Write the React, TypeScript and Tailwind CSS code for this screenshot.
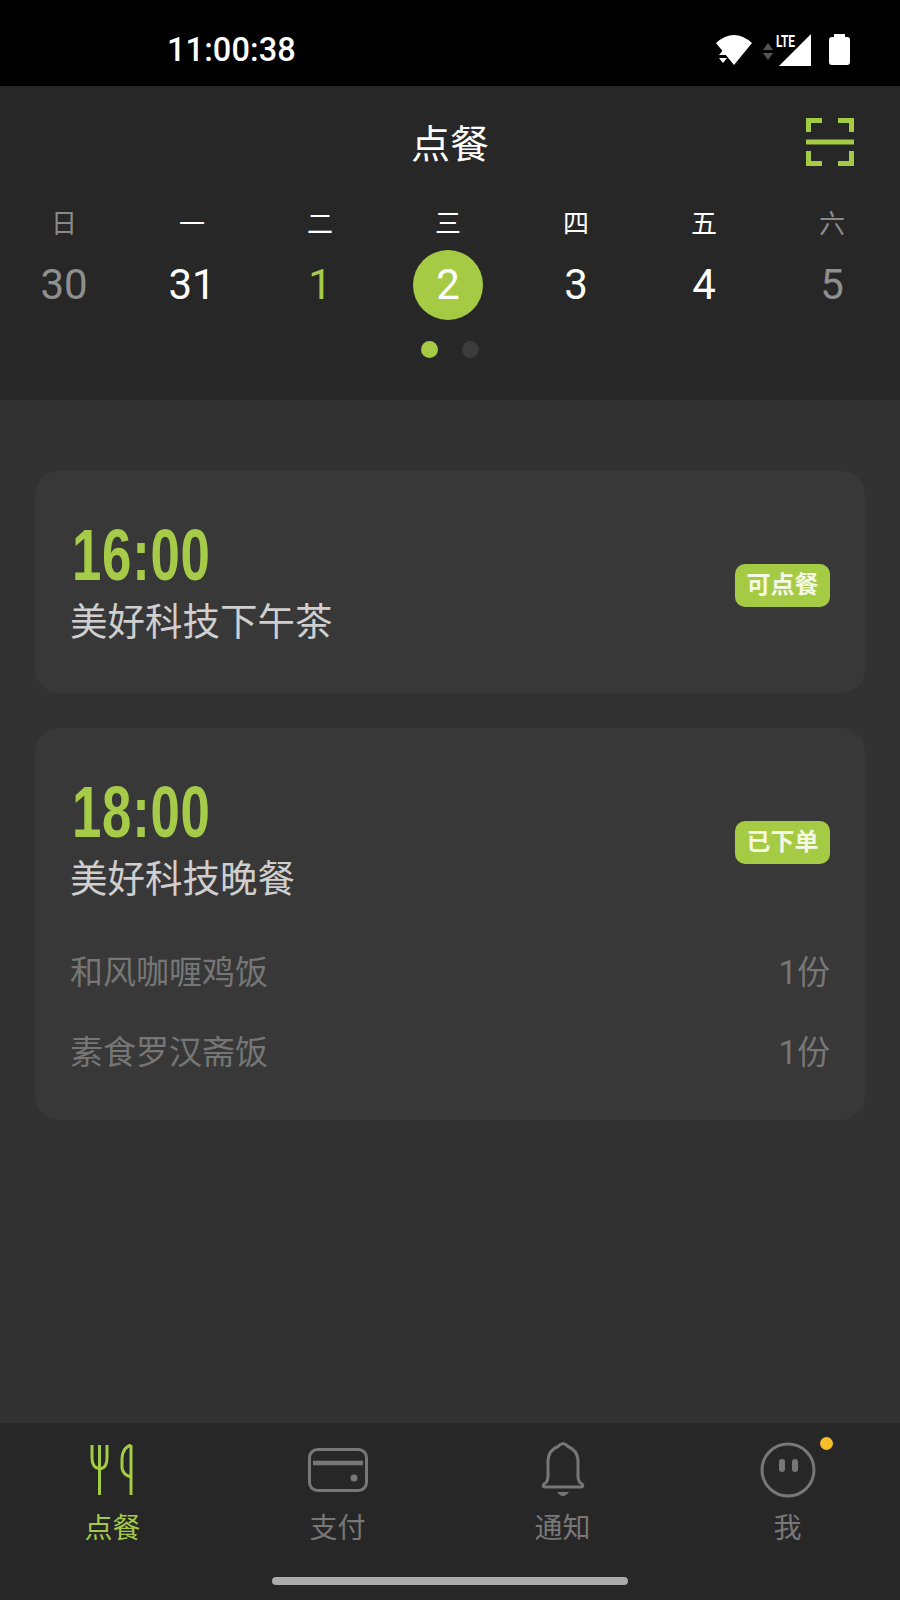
import React from "react";

const CJK = "font-['Roboto','Noto_Sans_CJK_SC',sans-serif]";

const days = [
  { w: "日", d: "30", wc: "text-[#8a8a8a]", dc: "text-[#8f8f8f]" },
  { w: "一", d: "31", wc: "text-white", dc: "text-white" },
  { w: "二", d: "1", wc: "text-white", dc: "text-[#a5cb48]" },
  { w: "三", d: "2", wc: "text-white", dc: "text-white", active: true },
  { w: "四", d: "3", wc: "text-white", dc: "text-white" },
  { w: "五", d: "4", wc: "text-white", dc: "text-white" },
  { w: "六", d: "5", wc: "text-[#8a8a8a]", dc: "text-[#8f8f8f]" },
];

function StatusIcons() {
  return (
    <svg width="148" height="44" viewBox="710 28 148 44">
      <path d="M716 43 Q734 27 752 43 L734 65 Z" fill="#fff" />
      <path d="M719 55 L723 50 L727 55 Z M719 58 L727 58 L723 63 Z" fill="#fff" />
      <path d="M763 50 L768 43 L773 50 Z M763 53 L773 53 L768 60 Z" fill="#555" />
      <path d="M779 66 L811 34 L811 66 Z" fill="#fff" />
      <text x="776" y="46.500" fontSize="16" fontWeight="700" fill="#fff" fontFamily="Roboto" textLength="19" lengthAdjust="spacingAndGlyphs">LTE</text>
      <path d="M832 37 Q829 37 829 40 L829 62 Q829 65 832 65 L847 65 Q850 65 850 62 L850 40 Q850 37 847 37 L845 37 L845 34 L834 34 L834 37 Z" fill="#fff" />
    </svg>
  );
}

function ScanIcon() {
  return (
    <svg width="48" height="48" viewBox="0 0 48 48" fill="none" stroke="#a4cb45" strokeWidth="5">
      <path d="M2.500 14 V2.500 H16 M32 2.500 H45.500 V14 M2.500 33 V45.500 H16 M32 45.500 H45.500 V33" />
      <path d="M0 24 H48" />
    </svg>
  );
}

function Badge({ text }: { text: string }) {
  return (
    <div className="w-[95px] h-[43px] rounded-[10px] bg-[#a5cb45] flex items-center justify-center text-[24px] leading-none font-bold text-[#f4f8e4]">
      {text}
    </div>
  );
}

function Time({ text }: { text: string }) {
  return (
    <div className="h-[64px] flex items-center">
      <span className="inline-block origin-left scale-x-[0.733] ml-[2px] tracking-[1px] font-['Liberation_Sans',sans-serif] font-bold text-[72px] leading-none text-[#a5cb48]">
        {text}
      </span>
    </div>
  );
}

function Card({ time, title, badge, items }: { time: string; title: string; badge: string; items?: string[] }) {
  return (
    <div className="rounded-[24px] bg-[#383838] pl-[35px] pr-[35px] pt-[52px] pb-[46px]">
      <div className="flex items-center justify-between">
        <div>
          <Time text={time} />
          <div className="mt-[10px] text-[37.500px] leading-[50px] text-[#cfcfcf]">{title}</div>
        </div>
        <Badge text={badge} />
      </div>
      {items && (
        <div className="mt-[46px] mb-[-2px] flex flex-col gap-[34px]">
          {items.map((it) => (
            <div key={it} className="flex justify-between text-[33px] leading-[46px] text-[#767676]">
              <span>{it}</span>
              <span>1份</span>
            </div>
          ))}
        </div>
      )}
    </div>
  );
}

const G = "#a4cb45";
const M = "#777777";

function Tab({ label, active, children }: { label: string; active?: boolean; children: React.ReactNode }) {
  return (
    <div className="flex flex-col items-center">
      <div className="h-[60px] flex items-center justify-center">{children}</div>
      <div className={`mt-[11px] text-[28px] leading-[36px] ${active ? "text-[#a4c94a]" : "text-[#777777]"}`}>{label}</div>
    </div>
  );
}

export default function App() {
  return (
    <div className={`w-[900px] h-[1600px] flex flex-col bg-[#323232] overflow-hidden ${CJK}`}>
      <div className="h-[86px] bg-black flex items-center justify-between pl-[167px] pr-[42px] pt-[14px]">
        <span className="text-[32.500px] font-medium text-white leading-none tracking-[0.1px]">11:00:38</span>
        <StatusIcons />
      </div>

      <div className="h-[314px] bg-[#272727] flex flex-col">
        <div className="relative h-[116px] pt-[2px] flex items-center justify-center">
          <span className="text-[39px] leading-none text-white">点餐</span>
          <div className="absolute left-[806px] top-[32px]">
            <ScanIcon />
          </div>
        </div>
        <div className="grid grid-cols-7 pr-[4px]">
          {days.map((x) => (
            <div key={x.w} className="flex flex-col items-center">
              <div className={`text-[26px] leading-[44px] ${x.wc}`}>{x.w}</div>
              <div className={`mt-[4px] w-[70px] h-[70px] rounded-full flex items-center justify-center text-[42px] leading-none ${x.dc} ${x.active ? "bg-[#a5cb45]" : ""}`}>
                {x.d}
              </div>
            </div>
          ))}
        </div>
        <div className="mt-[21px] flex justify-center gap-[24px]">
          <div className="w-[17px] h-[17px] rounded-full bg-[#a5cb45]" />
          <div className="w-[17px] h-[17px] rounded-full bg-[#3c3c3c]" />
        </div>
      </div>

      <div className="flex-1 px-[35px] pt-[71px] flex flex-col gap-[35px]">
        <Card time="16:00" title="美好科技下午茶" badge="可点餐" />
        <Card time="18:00" title="美好科技晚餐" badge="已下单" items={["和风咖喱鸡饭", "素食罗汉斋饭"]} />
      </div>

      <div className="h-[177px] bg-[#272727] flex flex-col">
        <div className="grid grid-cols-4 pt-[17px]">
          <Tab label="点餐" active>
            <svg width="46" height="52" viewBox="0 0 46 52" fill="none" stroke={G} strokeWidth="3">
              <path d="M2 1 V14 Q2 24 10 25 Q17 24 17 14 V1 M9.500 1 V51" />
              <path d="M41 1 Q33 3 32 14 V24 Q33 31 41 33 M41 1 V51" />
            </svg>
          </Tab>
          <Tab label="支付">
            <svg width="60" height="44" viewBox="0 0 60 44" fill="none" stroke={M} strokeWidth="3">
              <rect x="1.500" y="1.500" width="57" height="41" rx="8" />
              <path d="M5 15 H55" strokeWidth="4.500" />
              <circle cx="46" cy="30" r="3.500" fill={M} stroke="none" />
            </svg>
          </Tab>
          <Tab label="通知">
            <svg width="44" height="56" viewBox="0 0 44 56" fill="none" stroke={M} strokeWidth="3">
              <path d="M22 1.500 Q25 2 27 4.500 Q36 8 37 18 V34 Q37 40 41 42 Q43 45 40 45 H4 Q1 45 3 42 Q7 40 7 34 V18 Q8 8 17 4.500 Q19 2 22 1.500 Z" />
              <path d="M16 50 H28 Q25 54 22 54 Q19 54 16 50 Z" fill={M} stroke="none" />
            </svg>
          </Tab>
          <Tab label="我">
            <div className="relative w-[56px] h-[56px]">
              <svg width="56" height="56" viewBox="0 0 56 56" fill="none" stroke={M} strokeWidth="3">
                <circle cx="28" cy="28" r="26" />
                <rect x="19" y="17" width="6" height="13" rx="3" fill={M} stroke="none" />
                <rect x="32" y="17" width="6" height="13" rx="3" fill={M} stroke="none" />
              </svg>
              <div className="absolute left-[60px] top-[-5px] w-[13px] h-[13px] rounded-full bg-[#f5bd28]" />
            </div>
          </Tab>
        </div>
        <div className="mt-[30px] mx-auto w-[356px] h-[8px] rounded-full bg-[#ababab]" />
      </div>
    </div>
  );
}
